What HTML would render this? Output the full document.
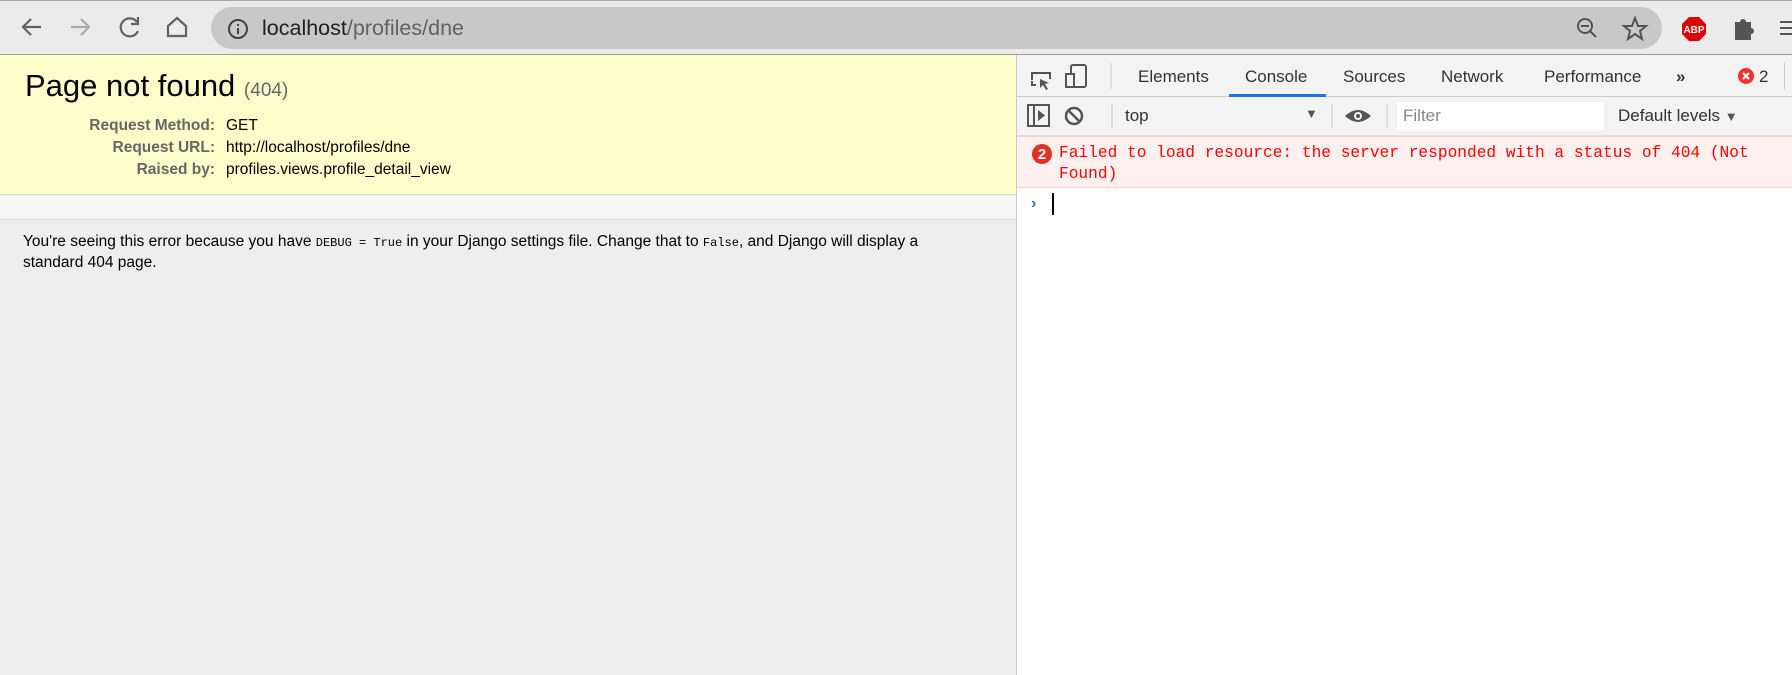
<!DOCTYPE html>
<html><head><meta charset="utf-8">
<style>
*{margin:0;padding:0;box-sizing:border-box}
body{width:1792px;height:675px;overflow:hidden;position:relative;font-family:"Liberation Sans",Arial,sans-serif;background:#eee}
.a{position:absolute}
#top{left:0;top:0;width:1792px;height:55px;background:#ebebeb;border-top:1px solid #aaa;border-bottom:1px solid #a0a0a0}
#addr{left:211px;top:7px;width:1451px;height:42px;border-radius:21px;background:#c8c8c8}
#url{left:262px;top:16px;font-size:21.5px;color:#202124}
#url span{color:#5f6368}
#page{left:0;top:55px;width:1016px;height:620px;background:#eee}
#sum{left:0;top:55px;width:1016px;height:140px;background:#ffc;border-bottom:1px solid #ddd}
#gap{left:0;top:196px;width:1016px;height:24px;background:#f5f5f5;border-bottom:1px solid #ddd}
h1{position:absolute;left:25px;top:68px;font-weight:normal;font-size:31px;color:#000}
h1 span{font-size:19px;color:#666}
.row{position:absolute;font-size:15.5px;color:#000}
.lab{position:absolute;width:215px;text-align:right;font-weight:bold;color:#666;left:0}
.val{position:absolute;left:226px;white-space:nowrap}
#expl{left:23px;top:232px;font-size:15.5px;line-height:19px;color:#000;width:980px}
code{font-family:"Liberation Mono",monospace;font-size:12px}
#dev{left:1016px;top:55px;width:776px;height:620px;background:#fff;border-left:1px solid #ccc}
#tabs{left:1017px;top:55px;width:775px;height:42px;background:#f3f3f3;border-bottom:1px solid #ccc}
.t{position:absolute;top:67px;font-size:17px;color:#333}
#bar{left:1017px;top:97px;width:775px;height:39px;background:#f3f3f3;border-bottom:1px solid #ddd}
#err{left:1017px;top:136px;width:775px;height:52px;background:#fff0f0;border-top:1px solid #fcd;border-bottom:1px solid #fcd}
#msg{left:1059px;top:143px;font-family:"Liberation Mono",monospace;font-size:16.2px;line-height:21px;color:#f00;width:725px}
</style></head><body>
<div class="a" id="top"></div>
<svg class="a" style="left:0;top:0" width="211" height="55">
<g fill="none" stroke="#5f6368" stroke-width="2.2">
<path d="M41 27H24M31 19l-8 8 8 8"/>
<path d="M71 27h17M81 19l8 8-8 8" stroke="#aaa"/>
<path d="M137 22a9 9 0 1 0 1 9"/><path d="M138 17v7h-7" />
<path d="M168 36v-10l9-8 9 8v10z"/>
</g></svg>
<div class="a" id="addr"></div>
<svg class="a" style="left:226px;top:17px" width="24" height="24"><circle cx="12" cy="12" r="9" fill="none" stroke="#444" stroke-width="2"/><path d="M12 11v6M12 7v2" stroke="#444" stroke-width="2"/></svg>
<div class="a" id="url">localhost<span>/profiles/dne</span></div>
<svg class="a" style="left:1575px;top:16px" width="217" height="26">
<circle cx="10" cy="10" r="7" fill="none" stroke="#555" stroke-width="2"/><path d="M6 10h8M15 15l6 6" stroke="#555" stroke-width="2"/>
<path d="M60 2l3 8h8l-6 5 2 8-7-5-7 5 2-8-6-5h8z" fill="none" stroke="#555" stroke-width="2"/>
<polygon points="114,1 124,1 131,8 131,18 124,25 114,25 107,18 107,8" fill="#d00"/>
<text x="119" y="17" font-size="10" font-weight="bold" fill="#fff" text-anchor="middle" font-family="Liberation Sans">ABP</text>
<path d="M160 6h5a3 3 0 0 1 6 0h5v6a3 3 0 0 1 0 6v6h-16z" fill="#555"/>
<path d="M205 6h12M205 12h12M205 18h12" stroke="#555" stroke-width="2"/>
</svg>
<div class="a" id="page"></div>
<div class="a" id="sum"></div>
<div class="a" id="gap"></div>
<h1>Page not found <span>(404)</span></h1>
<div class="row" style="top:117px;left:0"><span class="lab">Request Method:</span><span class="val">GET</span></div>
<div class="row" style="top:139px;left:0"><span class="lab">Request URL:</span><span class="val">http://localhost/profiles/dne</span></div>
<div class="row" style="top:161px;left:0"><span class="lab">Raised by:</span><span class="val">profiles.views.profile_detail_view</span></div>
<div class="a" id="expl">You're seeing this error because you have <code>DEBUG = True</code> in your Django settings file. Change that to <code>False</code>, and Django will display a<br>standard 404 page.</div>
<div class="a" id="dev"></div>
<div class="a" id="tabs"></div>
<svg class="a" style="left:1017px;top:55px" width="100" height="82">
<path d="M15 25v-7h18v6M15 26v4h4" fill="none" stroke="#555" stroke-width="2"/><path d="M23 24l9 4-4 1 3 5-2 1-3-5-3 3z" fill="#555"/>
<rect x="54" y="10" width="15" height="22" rx="2" fill="none" stroke="#555" stroke-width="2"/><rect x="49" y="19" width="8" height="13" fill="#f3f3f3" stroke="#555" stroke-width="2"/>
<path d="M94 8v26" stroke="#ccc"/>
</svg>
<div class="t" style="left:1138px">Elements</div>
<div class="t" style="left:1245px">Console</div>
<div class="a" style="left:1229px;top:94px;width:97px;height:3px;background:#1a73e8"></div>
<div class="t" style="left:1343px">Sources</div>
<div class="t" style="left:1441px">Network</div>
<div class="t" style="left:1544px">Performance</div>
<div class="t" style="left:1676px;font-weight:bold">»</div>
<svg class="a" style="left:1737px;top:67px" width="18" height="18"><circle cx="9" cy="9" r="8" fill="#e33"/><path d="M6 6l6 6M12 6l-6 6" stroke="#fff" stroke-width="2"/></svg>
<div class="t" style="left:1759px">2</div>
<div class="a" style="left:1784px;top:63px;width:1px;height:26px;background:#ccc"></div>
<div class="a" id="bar"></div>
<svg class="a" style="left:1017px;top:97px" width="400" height="39">
<rect x="11" y="8" width="21" height="21" fill="none" stroke="#555" stroke-width="2"/><path d="M17 8v21" stroke="#555" stroke-width="2"/><path d="M21 13l7 5.5-7 5.5z" fill="#555"/>
<circle cx="57" cy="19" r="8" fill="none" stroke="#555" stroke-width="2.5"/><path d="M51 13l12 12" stroke="#555" stroke-width="2.5"/>
<path d="M95 7v24" stroke="#ccc"/>
<path d="M315 7v24M370 7v24" stroke="#ccc"/>
<path d="M328 19q13-12 26 0q-13 12-26 0z" fill="#555"/><circle cx="341" cy="19" r="4" fill="#f3f3f3"/><circle cx="341" cy="19" r="2" fill="#555"/>
</svg>
<div class="a" style="left:1125px;top:106px;font-size:17px;color:#333">top</div>
<div class="a" style="left:1305px;top:106px;font-size:13px;color:#555">▼</div>
<div class="a" style="left:1397px;top:102px;width:207px;height:28px;background:#fff"></div>
<div class="a" style="left:1403px;top:106px;font-size:17px;color:#888">Filter</div>
<div class="a" style="left:1618px;top:106px;font-size:17px;color:#333">Default levels <span style="font-size:13px;color:#555">▼</span></div>
<div class="a" id="err"></div>
<svg class="a" style="left:1031px;top:143px" width="22" height="22"><circle cx="11" cy="11" r="10" fill="#d32"/><text x="11" y="16" font-size="15" font-weight="bold" fill="#fff" text-anchor="middle" font-family="Liberation Sans">2</text></svg>
<div class="a" id="msg">Failed to load resource: the server responded with a status of 404 (Not Found)</div>
<div class="a" style="left:1031px;top:195px;font-size:16px;color:#1a73e8;font-weight:bold">›</div>
<div class="a" style="left:1052px;top:193px;width:2px;height:22px;background:#000"></div>
</body></html>
